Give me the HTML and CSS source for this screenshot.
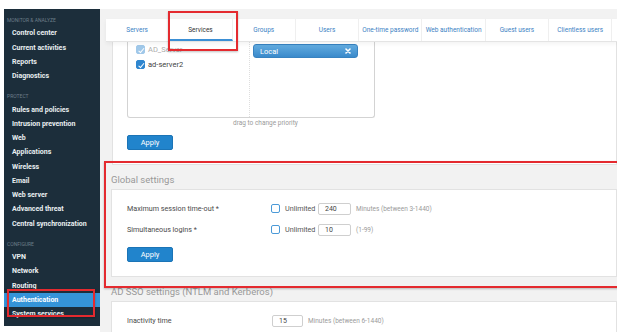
FILE: index.html
```html
<!DOCTYPE html>
<html lang="en">
<head>
  <meta charset="UTF-8" />
  <meta name="viewport" content="width=device-width, initial-scale=1.0"/>
  <title>Authentication - Services</title>
  <link rel="stylesheet" href="styles.css">
</head>
<body>

  <div class="frame">
    <!-- Left navigation -->
    <nav class="sidebar">
      <div class="nav-heading first">Monitor &amp; analyze</div>
      <div class="nav-item">Control center</div>
      <div class="nav-item">Current activities</div>
      <div class="nav-item">Reports</div>
      <div class="nav-item">Diagnostics</div>

      <div class="nav-heading">Protect</div>
      <div class="nav-item">Rules and policies</div>
      <div class="nav-item">Intrusion prevention</div>
      <div class="nav-item">Web</div>
      <div class="nav-item">Applications</div>
      <div class="nav-item">Wireless</div>
      <div class="nav-item">Email</div>
      <div class="nav-item">Web server</div>
      <div class="nav-item">Advanced threat</div>
      <div class="nav-item">Central synchronization</div>

      <div class="nav-heading">Configure</div>
      <div class="nav-item">VPN</div>
      <div class="nav-item">Network</div>
      <div class="nav-item">Routing</div>
      <div class="nav-item active">Authentication</div>
      <div class="nav-item">System services</div>
    </nav>

    <main class="content">
      <div class="tabs">
        <div class="tab">Servers</div>
        <div class="tab active">Services</div>
        <div class="tab">Groups</div>
        <div class="tab">Users</div>
        <div class="tab">One-time password</div>
        <div class="tab">Web authentication</div>
        <div class="tab">Guest users</div>
        <div class="tab">Clientless users</div>
      </div>

      <!-- Server priority -->
      <div class="card server-card">
        <div class="server-box">
          <div class="server-list">
            <div class="server faded"><span class="check on"></span>AD_Server</div>
            <div class="server"><span class="check on"></span>ad-server2</div>
          </div>
          <div class="server-order">
            <div class="pill">
              <span>Local</span>
              <svg class="pill-x" width="6" height="6" viewBox="0 0 6 6">
                <path d="M1 1L5 5M5 1L1 5" stroke="#fff" stroke-width="1.6" stroke-linecap="round"/>
              </svg>
            </div>
          </div>
        </div>
        <div class="drag-hint">drag to change priority</div>
        <button class="btn">Apply</button>
      </div>

      <!-- Global settings -->
      <div class="section-title">Global settings</div>
      <div class="card form-card">
        <div class="form-row">
          <span class="form-label">Maximum session time-out *</span>
          <span class="check"></span>
          <span class="check-label">Unlimited</span>
          <input class="num" type="text" value="240" />
          <span class="hint">Minutes (between 3-1440)</span>
        </div>
        <div class="form-row">
          <span class="form-label">Simultaneous logins *</span>
          <span class="check"></span>
          <span class="check-label">Unlimited</span>
          <input class="num" type="text" value="10" />
          <span class="hint">(1-99)</span>
        </div>
        <button class="btn">Apply</button>
      </div>

      <!-- AD SSO -->
      <div class="section-title">AD SSO settings (NTLM and Kerberos)</div>
      <div class="card form-card">
        <div class="form-row">
          <span class="form-label wide">Inactivity time</span>
          <input class="num short" type="text" value="15" />
          <span class="hint">Minutes (between 6-1440)</span>
        </div>
      </div>
    </main>

    <!-- red annotation boxes -->
    <div class="annot annot-tab"></div>
    <div class="annot annot-global"></div>
    <div class="annot annot-nav"></div>
  </div>

</body>
</html>
```

FILE: styles.css
```css
* {
  box-sizing: border-box;
}

body {
  margin: 0;
  background: #fff;
  font-family: Roboto, "Open Sans", sans-serif;
}

.frame {
  position: relative;
  display: flex;
  width: 613px;
  height: 323px;
  margin: 9px 0 0 4px;
  overflow: hidden;
}

/* Sidebar */

.sidebar {
  flex: none;
  width: 96px;
  height: 317px;
  background: #1c2e3b;
}

.nav-heading {
  height: 19.25px;
  padding: 8px 0 0 3px;
  font-size: 5px;
  line-height: 11px;
  color: #6c7d89;
  text-transform: uppercase;
}

.nav-heading.first {
  height: 17.4px;
  padding-top: 6px;
}

.nav-item {
  height: 14.25px;
  padding-left: 8px;
  font-size: 7px;
  font-weight: 700;
  line-height: 14.25px;
  color: #e9eef1;
  white-space: nowrap;
}

.nav-item.active {
  background: #3594d8;
  color: #fff;
}

/* Content */

.content {
  flex: 1;
  min-width: 0;
  padding: 10px 0 0 6px;
  background: #f2f2f2;
}

.tabs {
  display: flex;
  height: 23px;
  background: #fff;
  border-bottom: 1px solid #e4e4e4;
  box-shadow: 0 2px 4px rgba(0, 0, 0, 0.05);
  position: relative;
  z-index: 1;
}

.tab {
  flex: none;
  width: 63.3px;
  border-right: 1px solid #efefef;
  font-size: 6.5px;
  line-height: 22px;
  text-align: center;
  color: #3c82c4;
  white-space: nowrap;
}

.tab.active {
  color: #333;
  border-bottom: 2px solid #3b8fd5;
}

.card {
  margin-left: 6px;
  background: #fff;
  border: 1px solid #e2e2e2;
  border-top: none;
}

.server-card {
  padding: 0 0 14px 14px;
}

.server-box {
  display: flex;
  width: 248px;
  height: 76px;
  border: 1px solid #d3d3d3;
  border-top: none;
  border-radius: 0 0 3px 3px;
}

.server-list {
  width: 122px;
  border-right: 1px dotted #dedede;
}

.server {
  display: flex;
  align-items: center;
  height: 15px;
  padding-left: 8px;
  font-size: 7.5px;
  color: #444;
}

.server .check {
  margin-right: 3px;
}

.server.faded {
  opacity: 0.45;
}

.server-order {
  flex: 1;
  padding: 2px 0 0 3px;
}

.pill {
  display: flex;
  align-items: center;
  justify-content: space-between;
  width: 105px;
  height: 14px;
  padding: 0 6px;
  border: 1px solid #3882c0;
  border-radius: 3px;
  background: linear-gradient(#62abdf, #3a8acb);
  font-size: 7.5px;
  color: #fff;
}

.drag-hint {
  margin: 1px 0 0 106px;
  font-size: 6.5px;
  line-height: 9px;
  color: #9a9a9a;
}

.btn {
  display: block;
  width: 46px;
  height: 15px;
  margin-top: 7px;
  padding: 0;
  border: 1px solid #1b74b6;
  border-radius: 2px;
  background: #2184cc;
  font-family: inherit;
  font-size: 7.5px;
  color: #fff;
}

.check {
  flex: none;
  display: inline-block;
  position: relative;
  width: 9px;
  height: 9px;
  border: 1px solid #4b9ad8;
  border-radius: 2px;
  background: #fff;
}

.check.on {
  background: #2f86cf;
  border-color: #2f86cf;
}

.check.on::after {
  content: "";
  position: absolute;
  left: 2.5px;
  top: 0.5px;
  width: 2px;
  height: 4.5px;
  border: solid #fff;
  border-width: 0 1.3px 1.3px 0;
  transform: rotate(40deg);
}

.section-title {
  margin-left: 5px;
  padding: 9px 0 3px;
  font-size: 9.5px;
  line-height: 12px;
  color: #999;
  white-space: nowrap;
}

.form-card {
  margin-left: 5px;
  border-top: 1px solid #e2e2e2;
  padding: 11px 0 14px 15px;
}

.form-row {
  display: flex;
  align-items: center;
  height: 15px;
  margin-bottom: 6px;
}

.form-label {
  flex: none;
  width: 144px;
  font-size: 7.2px;
  color: #4a4a4a;
}

.form-label.wide {
  width: 145px;
}

.check-label {
  width: 38px;
  padding-left: 5px;
  font-size: 7.2px;
  color: #555;
}

.num {
  width: 33px;
  height: 12px;
  padding: 0 0 0 6px;
  border: 1px solid #cfcfcf;
  border-radius: 2px;
  font-family: inherit;
  font-size: 7px;
  color: #444;
}

.num.short {
  width: 31px;
}

.hint {
  margin-left: 5px;
  font-size: 6.5px;
  color: #9a9a9a;
}

.form-card .btn {
  margin-top: 10px;
}

/* Red annotation boxes laid over the screenshot */

.annot {
  position: absolute;
  border: 2px solid #e42a2f;
  box-shadow: 0 1px 2px rgba(0, 0, 0, 0.25);
  z-index: 5;
}

.annot-tab {
  left: 164px;
  top: 2px;
  width: 70px;
  height: 40px;
}

.annot-global {
  left: 100px;
  top: 152px;
  width: 560px;
  height: 127px;
  border-right: none;
}

.annot-nav {
  left: 3px;
  top: 280px;
  width: 88px;
  height: 28px;
}
```
